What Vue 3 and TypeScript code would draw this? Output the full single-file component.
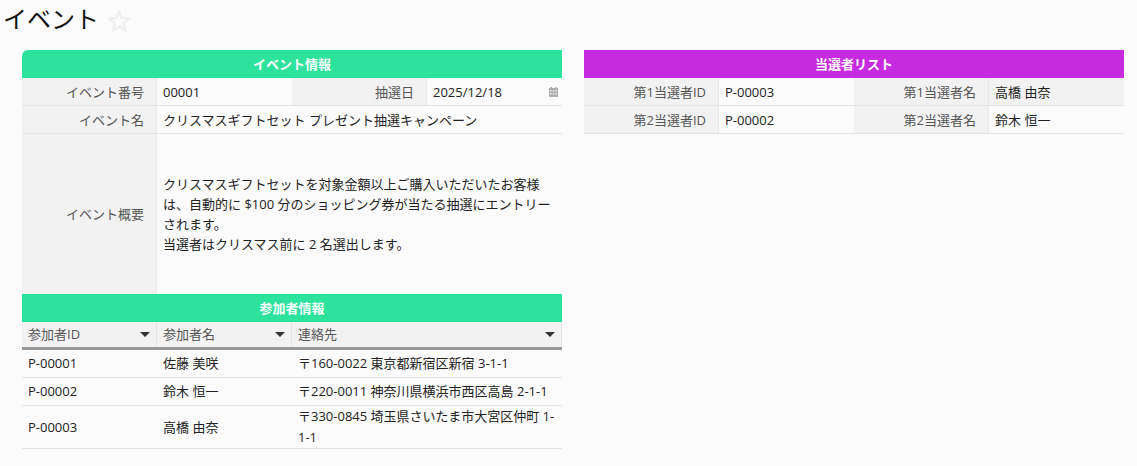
<script setup lang="ts">
interface Participant {
  id: string;
  name: string;
  contact: string;
}

const participants: Participant[] = [
  { id: 'P-00001', name: '佐藤 美咲', contact: '〒160-0022 東京都新宿区新宿 3-1-1' },
  { id: 'P-00002', name: '鈴木 恒一', contact: '〒220-0011 神奈川県横浜市西区高島 2-1-1' },
  { id: 'P-00003', name: '高橋 由奈', contact: '〒330-0845 埼玉県さいたま市大宮区仲町 1-1-1' },
];

const columns = ['参加者ID', '参加者名', '連絡先'];
</script>

<template>
  <div class="page">
    <div class="title-row">
      <h1>イベント</h1>
      <svg class="star" viewBox="0 0 24 24" aria-hidden="true">
        <path d="M12 2.800l2.800 6.300 6.900.7-5.200 4.600 1.500 6.800-6-3.500-6 3.500 1.500-6.800-5.200-4.600 6.900-.7z" fill="none" stroke="#efefef" stroke-width="2.400" />
      </svg>
    </div>

    <div class="panels">
      <section class="panel">
        <h2 class="band green first">イベント情報</h2>
        <div class="row four">
          <div class="label">イベント番号</div>
          <div class="value">00001</div>
          <div class="label">抽選日</div>
          <div class="value date">
            <span>2025/12/18</span>
            <svg class="cal" viewBox="0 0 9 10" aria-hidden="true">
              <path d="M1.500 0h1.500v1h3V0h1.500v1H9v9H0V1h1.500z" fill="#aeaeae" />
              <path d="M1 3h1.500v1.500H1zM3.750 3h1.500v1.500h-1.500zM6.500 3H8v1.500H6.500zM1 6h1.500v1.500H1zM3.750 6h1.500v1.500h-1.500zM6.500 6H8v1.500H6.500z" fill="#eee" />
            </svg>
          </div>
        </div>
        <div class="row two">
          <div class="label">イベント名</div>
          <div class="value">クリスマスギフトセット プレゼント抽選キャンペーン</div>
        </div>
        <div class="row two tall">
          <div class="label">イベント概要</div>
          <div class="value">
            <p>クリスマスギフトセットを対象金額以上ご購入いただいたお客様は、自動的に $100 分のショッピング券が当たる抽選にエントリーされます。<br>当選者はクリスマス前に 2 名選出します。</p>
          </div>
        </div>

        <h2 class="band green">参加者情報</h2>
        <div class="grid head">
          <div v-for="col in columns" :key="col" class="th">
            <span>{{ col }}</span>
            <i class="caret"></i>
          </div>
        </div>
        <div v-for="p in participants" :key="p.id" class="grid body">
          <div class="td">{{ p.id }}</div>
          <div class="td">{{ p.name }}</div>
          <div class="td">{{ p.contact }}</div>
        </div>
      </section>

      <section class="panel">
        <h2 class="band purple">当選者リスト</h2>
        <div class="row four">
          <div class="label">第1当選者ID</div>
          <div class="value">P-00003</div>
          <div class="label">第1当選者名</div>
          <div class="value shaded">高橋 由奈</div>
        </div>
        <div class="row four">
          <div class="label">第2当選者ID</div>
          <div class="value">P-00002</div>
          <div class="label">第2当選者名</div>
          <div class="value">鈴木 恒一</div>
        </div>
      </section>
    </div>
  </div>
</template>

<style>
html, body { background: #fbfbfb; }
</style>

<style scoped>
.page { width: 1137px; height: 466px; overflow: hidden; background: #fbfbfb; color: #222; font: 13px/20px "Open Sans", "Noto Sans CJK JP", sans-serif; }
.title-row { height: 50px; padding: 5px 0 0 3px; box-sizing: border-box; display: flex; align-items: flex-start; }
h1 { margin: 0; font-size: 24px; line-height: 28px; font-weight: 400; color: #111; }
.star { width: 24px; height: 24px; margin: 4px 0 0 8px; }
.panels { display: flex; gap: 22px; padding-left: 22px; }
.panel { width: 540px; }
.band { margin: 0; height: 28px; font-size: 13px; line-height: 29px; font-weight: 700; color: #fff; text-align: center; }
.green { background: #2de29d; }
.purple { background: #c62be0; }
.first { border-top-left-radius: 6px; }
.row { display: grid; grid-template-rows: 27px; border-bottom: 1px solid #e4e4e4; box-sizing: border-box; height: 28px; }
.four { grid-template-columns: 135px 135px 135px 135px; }
.two { grid-template-columns: 135px 405px; }
.tall { grid-template-rows: 160px; height: 160px; border-bottom: 0; }
.label { background: #f2f2f2; border-right: 1px solid #e8e8e8; color: #555; text-align: right; padding-right: 12px; line-height: 28px; white-space: nowrap; }
.value { padding: 0 6px; line-height: 28px; white-space: nowrap; }
.value.shaded { background: #f2f2f2; }
.date { display: flex; justify-content: space-between; align-items: center; padding-right: 4px; }
.cal { width: 9px; height: 10px; }
.tall .label, .tall .value { display: flex; align-items: center; }
.tall .label { justify-content: flex-end; }
.tall .value { white-space: normal; padding-right: 8px; }
.tall p { margin: 0; line-height: 20px; }
.grid { display: grid; grid-template-columns: 135px 135px 270px; }
.head { height: 28px; background: #f2f2f2; border-bottom: 3px solid #999; box-sizing: border-box; }
.th { display: flex; justify-content: space-between; align-items: center; padding: 0 6px; color: #555; border-right: 1px solid #e4e4e4; line-height: 25px; }
.caret { width: 0; height: 0; border: 5px solid transparent; border-top: 5px solid #333; border-bottom: 0; }
.body { border-bottom: 1px solid #e4e4e4; box-sizing: border-box; min-height: 28px; }
.td { padding: 0 6px; align-self: center; line-height: 21px; }
</style>
